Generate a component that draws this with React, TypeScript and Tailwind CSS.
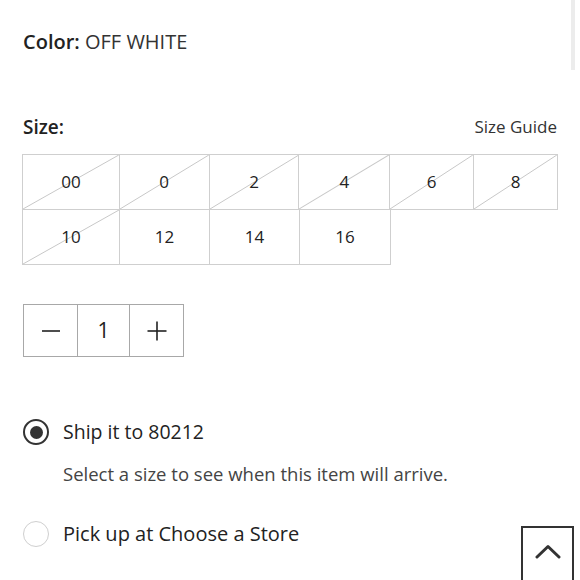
import React from "react";

const font = { fontFamily: "'Open Sans', 'Noto Sans', sans-serif" };

function Cell({ label, w, crossed, first }: { label: string; w: string; crossed: boolean; first?: boolean }) {
  return (
    <div
      className={`relative flex h-[56px] items-center justify-center border border-[#cfcfcf] text-[17px] text-[#222] ${w} ${first ? "" : "-ml-px"}`}
    >
      {crossed && (
        <svg className="absolute inset-0 h-full w-full" preserveAspectRatio="none" viewBox="0 0 100 100">
          <line x1="0" y1="100" x2="100" y2="0" stroke="#c8c8c8" strokeWidth="1" vectorEffect="non-scaling-stroke" />
        </svg>
      )}
      <span className="relative">{label}</span>
    </div>
  );
}

export default function App() {
  return (
    <div className="relative h-[580px] w-[580px] overflow-hidden bg-white pl-[23px] pr-[22px]" style={font}>
      <div className="absolute right-[5px] top-0 h-[70px] w-[4px] bg-[#ececec]" />

      <p className="mt-[30px] text-[20px] leading-[24px] text-[#222]">
        <span className="font-semibold">Color:</span> <span className="text-[#333]">OFF WHITE</span>
      </p>

      <div className="mt-[61px] flex items-center justify-between pr-[1px]">
        <span className="text-[19px] font-semibold leading-[24px] text-[#222]">Size:</span>
        <span className="text-[17px] leading-[24px] text-[#333]">Size Guide</span>
      </div>

      <div className="-ml-px mt-[15px]">
        <div className="flex">
          <Cell label="00" w="w-[98px]" crossed first />
          <Cell label="0" w="w-[91px]" crossed />
          <Cell label="2" w="w-[91px]" crossed />
          <Cell label="4" w="w-[92px]" crossed />
          <Cell label="6" w="w-[85px]" crossed />
          <Cell label="8" w="w-[85px]" crossed />
        </div>
        <div className="-mt-px flex">
          <Cell label="10" w="w-[98px]" crossed first />
          <Cell label="12" w="w-[91px]" crossed={false} />
          <Cell label="14" w="w-[91px]" crossed={false} />
          <Cell label="16" w="w-[92px]" crossed={false} />
        </div>
      </div>

      <div className="mt-[39px] flex">
        <div className="flex h-[53px] w-[55px] items-center justify-center border border-[#a8a8a8]">
          <svg width="20" height="20" viewBox="0 0 20 20">
            <line x1="1" y1="10" x2="19" y2="10" stroke="#222" strokeWidth="1.6" />
          </svg>
        </div>
        <div className="-ml-px flex h-[53px] w-[53px] items-center justify-center border border-[#a8a8a8] text-[21px] text-[#222]">
          1
        </div>
        <div className="-ml-px flex h-[53px] w-[55px] items-center justify-center border border-[#a8a8a8]">
          <svg width="20" height="20" viewBox="0 0 20 20">
            <line x1="0.5" y1="10" x2="19.5" y2="10" stroke="#222" strokeWidth="1.6" />
            <line x1="10" y1="0.5" x2="10" y2="19.5" stroke="#222" strokeWidth="1.6" />
          </svg>
        </div>
      </div>

      <div className="mt-[62px] flex items-center">
        <div className="flex h-[26px] w-[26px] items-center justify-center rounded-full border-2 border-[#333]">
          <div className="h-[13px] w-[13px] rounded-full bg-[#333]" />
        </div>
        <span className="ml-[14px] text-[19.5px] leading-[26px] text-[#222]">Ship it to 80212</span>
      </div>
      <p className="ml-[40px] mt-[17px] text-[18.5px] leading-[24px] text-[#444]">
        Select a size to see when this item will arrive.
      </p>

      <div className="mt-[35px] flex items-center">
        <div className="h-[26px] w-[26px] rounded-full border-[1.5px] border-[#cfcfcf]" />
        <span className="ml-[14px] text-[20px] leading-[26px] text-[#222]">Pick up at Choose a Store</span>
      </div>

      <div className="absolute left-[521px] top-[526px] flex h-[70px] w-[53px] items-start justify-center border-2 border-[#333] bg-white pt-[16px]">
        <svg width="26" height="16" viewBox="0 0 26 16">
          <polyline points="2,13 13,2.5 24,13" fill="none" stroke="#333" strokeWidth="3" strokeLinecap="round" strokeLinejoin="round" />
        </svg>
      </div>
    </div>
  );
}
